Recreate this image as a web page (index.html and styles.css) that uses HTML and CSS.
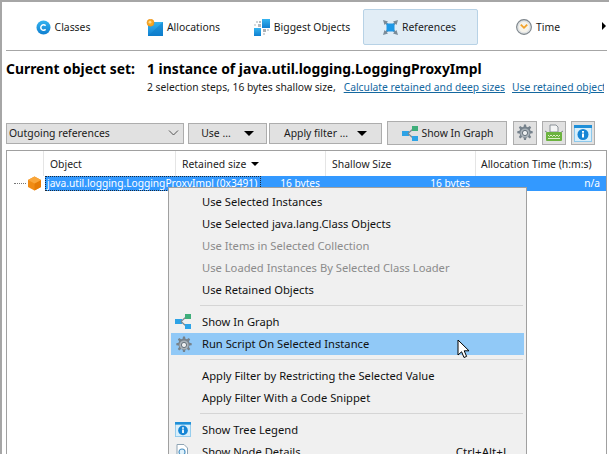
FILE: index.html
```html
<!DOCTYPE html>
<html lang="en">
<head>
<meta charset="utf-8">
<title>References</title>
<link rel="stylesheet" href="styles.css">
</head>
<body>
<svg class="defs" width="0" height="0" aria-hidden="true">
  <defs>
    <linearGradient id="blue" x1="0" y1="0" x2="0" y2="1"><stop offset="0" stop-color="#35b4f0"/><stop offset="1" stop-color="#0f7fd0"/></linearGradient>
    <g id="graph"><rect x="0" y="5" width="7" height="5" fill="#2ea3e6"/><path d="M6 7.5 L11 3 M6 7.5 L11 12" stroke="#7a8a94" stroke-width="1.2" fill="none"/><rect x="10" y="0" width="6" height="5" fill="#3fae7a"/><rect x="10" y="10" width="6" height="5" fill="#2ea3e6"/></g>
    <g id="gear"><path d="M8 0.5h2l.4 2.2 1.5.6 1.9-1.3 1.4 1.4-1.3 1.9.6 1.5 2.2.4v2l-2.2.4-.6 1.5 1.3 1.9-1.4 1.4-1.9-1.3-1.5.6-.4 2.2H8l-.4-2.2-1.5-.6-1.9 1.3-1.4-1.4 1.3-1.9-.6-1.5-2.2-.4v-2l2.2-.4.6-1.5-1.3-1.9 1.4-1.4 1.9 1.3 1.5-.6z" fill="#76828c"/><circle cx="9" cy="9" r="4.6" fill="#a9b2b9"/><circle cx="9" cy="9" r="2.6" fill="#eef0f1" stroke="#66727c"/></g>
    <g id="info"><rect x="0.5" y="0.5" width="17" height="16" fill="#d8effb" stroke="#8cc8ec"/><rect x="0" y="0" width="18" height="3" fill="#1f8fd8"/><circle cx="9" cy="9.5" r="5.5" fill="#1685d5"/><rect x="8" y="8.5" width="2" height="4" fill="#fff"/><rect x="8" y="6" width="2" height="1.7" fill="#fff"/></g>
  </defs>
</svg>
<div class="app">
  <nav class="tabs">
    <div class="tab tab-classes">
      <svg class="ico" width="15" height="15" viewBox="0 0 15 15"><circle cx="7.5" cy="7.5" r="7" fill="url(#blue)"/><path d="M9.6 5.8 A2.7 2.7 0 1 0 9.6 9.2" stroke="#fff" stroke-width="1.5" fill="none"/></svg>
      <span>Classes</span>
    </div>
    <div class="tab tab-alloc">
      <svg class="ico" width="17" height="17" viewBox="0 0 17 17"><rect x="2" y="3" width="15" height="14" fill="url(#blue)"/><path d="M2 17 L17 3 V17 Z" fill="#0c79c8" opacity=".5"/><circle cx="4.5" cy="3.7" r="3.5" fill="#f7a823" stroke="#ea8c10" stroke-width=".6"/><circle cx="4" cy="3.2" r="1.4" fill="#ffd98a"/></svg>
      <span>Allocations</span>
    </div>
    <div class="tab tab-big">
      <svg class="ico" width="16" height="17" viewBox="0 0 16 17"><rect x="8" y="0" width="8" height="9" fill="url(#blue)"/><rect x="0" y="9" width="7" height="8" fill="url(#blue)"/><rect x="2" y="2" width="2" height="2" fill="#cfd4d7"/><rect x="5" y="2" width="2" height="2" fill="#b5bbbf"/><rect x="0" y="5" width="2" height="2" fill="#d8dbdd"/><rect x="4" y="5" width="3" height="3" fill="#b5bbbf"/><rect x="9" y="10" width="3" height="3" fill="#aab0b5"/><rect x="13" y="10" width="2" height="2" fill="#cfd4d7"/><rect x="9" y="14" width="2" height="2" fill="#d0d4d7"/></svg>
      <span>Biggest Objects</span>
    </div>
    <div class="tab tab-refs">
      <svg class="ico" width="15" height="15" viewBox="0 0 15 15"><path d="M0 0 L5 1.5 L1.5 5 Z M15 0 L10 1.5 L13.5 5 Z M0 15 L1.5 10 L5 13.5 Z M15 15 L13.5 10 L10 13.5 Z" fill="#7b8c99"/><path d="M2 2 L13 13 M13 2 L2 13" stroke="#7b8c99" stroke-width="1.8"/><rect x="3.5" y="3.5" width="8" height="8" fill="#1e98e6"/></svg>
      <span>References</span>
    </div>
    <div class="tab tab-time">
      <svg class="ico" width="16" height="16" viewBox="0 0 16 16"><circle cx="8" cy="8" r="7.4" fill="#dfe2e4" stroke="#7d858b" stroke-width="1.1"/><circle cx="8" cy="8" r="5.3" fill="#f6f3ea"/><path d="M4.8 5.6 L8 8.8 L11.2 5.6" stroke="#f2a22a" stroke-width="1.8" fill="none"/></svg>
      <span>Time</span>
    </div>
    <span class="more"></span>
  </nav>
  <div class="rule"></div>

  <h1 class="title"><span class="title-label">Current object set:</span><span>1 instance of java.util.logging.LoggingProxyImpl</span></h1>
  <p class="sub"><span>2 selection steps, 16 bytes shallow size,</span><a class="link-a">Calculate retained and deep sizes</a><a class="link-b">Use retained objects</a></p>

  <div class="toolbar">
    <div class="ctl combo"><span>Outgoing references</span><svg width="11" height="6" viewBox="0 0 11 6"><path d="M1 .5 L5.5 5 L10 .5" stroke="#555" fill="none"/></svg></div>
    <div class="ctl btn-use"><span>Use ...</span><i class="caret"></i></div>
    <div class="ctl btn-apply"><span>Apply filter ...</span><i class="caret"></i></div>
    <div class="ctl tall btn-graph"><svg width="16" height="15" viewBox="0 0 16 15"><use href="#graph"/></svg><span>Show In Graph</span></div>
    <div class="ctl tall square"><svg width="18" height="18" viewBox="0 0 18 18"><use href="#gear"/></svg></div>
    <div class="ctl tall square"><svg width="18" height="18" viewBox="0 0 18 18"><path d="M5 1 h6 l2 2 v5 H5 Z" fill="#f4f5f5" stroke="#8a9197"/><path d="M0 7 L3 9 M18 7 L15 9" stroke="#7d858b"/><rect x="1" y="8" width="16" height="9" rx="1" fill="#6cb33f"/><path d="M3 11 l1.5 1.5 L6 11 l1.5 1.5 L9 11 l1.5 1.5 L12 11 l1.5 1.5 L15 11" stroke="#dff0c8" fill="none"/><rect x="3" y="14" width="12" height="1" fill="#dff0c8"/></svg></div>
    <div class="ctl tall square"><svg width="18" height="17" viewBox="0 0 18 17"><use href="#info"/></svg></div>
  </div>

  <section class="table">
    <div class="grid head">
      <div class="cell"></div>
      <div class="cell">Object</div>
      <div class="cell">Retained size<i class="caret small"></i></div>
      <div class="cell">Shallow Size</div>
      <div class="cell last">Allocation Time (h:m:s)</div>
    </div>
    <div class="grid row">
      <div class="tree"><i class="dots"></i><svg width="15" height="15" viewBox="0 0 15 15"><path d="M7.5 0.5 L14 4 V11 L7.5 14.5 L1 11 V4 Z" fill="#f08c14"/><path d="M7.5 7.5 L14 4 V11 L7.5 14.5 Z" fill="#e57c06"/><path d="M7.5 0.5 L14 4 L7.5 7.5 L1 4 Z" fill="#f9a63a"/></svg></div>
      <div class="sel obj"><span class="focus">java.util.logging.LoggingProxyImpl (0x3491)</span></div>
      <div class="sel num">16 bytes</div>
      <div class="sel num">16 bytes</div>
      <div class="sel num last">n/a</div>
    </div>
  </section>
</div>

<div class="menu">
  <div class="item">Use Selected Instances</div>
  <div class="item">Use Selected java.lang.Class Objects</div>
  <div class="item off">Use Items in Selected Collection</div>
  <div class="item off">Use Loaded Instances By Selected Class Loader</div>
  <div class="item">Use Retained Objects</div>
  <div class="sep"></div>
  <div class="item"><svg class="mi" width="16" height="15" viewBox="0 0 16 15"><use href="#graph"/></svg>Show In Graph</div>
  <div class="item hot"><svg class="mi" width="18" height="18" viewBox="0 0 18 18"><use href="#gear"/></svg>Run Script On Selected Instance</div>
  <div class="sep"></div>
  <div class="item">Apply Filter by Restricting the Selected Value</div>
  <div class="item">Apply Filter With a Code Snippet</div>
  <div class="sep"></div>
  <div class="item"><svg class="mi" width="16" height="15" viewBox="0 0 18 17"><use href="#info"/></svg>Show Tree Legend</div>
  <div class="item"><svg class="mi" width="14" height="16" viewBox="0 0 14 16"><path d="M2 .5 H9 L12.5 4 V15.5 H2 Z" fill="#fff" stroke="#8fa4b4"/><circle cx="7" cy="8" r="3" fill="#dff1fb" stroke="#4d93c4" stroke-width="1.2"/></svg>Show Node Details<span class="key">Ctrl+Alt+L</span></div>
</div>

<svg class="cursor" width="14" height="20" viewBox="0 0 14 20"><path d="M1 1 V16 L4.6 12.8 L7 18.5 L9.6 17.4 L7.2 11.8 H12 Z" fill="#fff" stroke="#000" stroke-width="1"/></svg>
</body>
</html>
```
FILE: styles.css
```css
* { box-sizing: border-box; }
html, body { margin: 0; padding: 0; }
body {
  width: 609px; height: 454px; overflow: hidden; position: relative;
  background: #fff; color: #1a1a1a;
  font: 10.4px/16px "Noto Sans", "Liberation Sans", sans-serif;
}
.defs { position: absolute; }
svg { display: block; flex: none; }
.app {
  height: 454px; width: 609px;
  border-top: 2px solid #a6a6a6; border-left: 2px solid #a6a6a6;
  padding-left: 4px;
  display: flex; flex-direction: column;
}
.tabs { display: flex; height: 36px; margin-top: 7px; position: relative; align-items: stretch; }
.tab { display: flex; align-items: center; justify-content: center; gap: 4px; border: 1px solid transparent; border-radius: 2px; font-size: 10.4px; }
.tab-classes { width: 114px; }
.tab-alloc { width: 126px; }
.tab-big { width: 112px; margin-right: 5px; }
.tab-refs { width: 115px; background: #e1edf6; border-color: #b7d2e6; padding-right: 2px; }
.tab-time { width: 120px; margin-right: 4px; }
.more { width: 0; height: 0; margin-top: 13px; border-left: 4px solid #000; border-top: 4px solid transparent; border-bottom: 4px solid transparent; }
.rule { width: 601px; height: 1px; background: #a6a6a6; margin-top: 5px; }

.title { margin: 8px 0 0; display: flex; font-size: 13.9px; line-height: 20px; font-weight: 700; color: #000; white-space: nowrap; }
.title-label { width: 141px; }
.sub { margin: 0 0 0 141px; width: 457px; height: 16px; overflow: hidden; display: flex; white-space: nowrap; font-size: 10.3px; }
.link-a { color: #14689f; text-decoration: underline; margin-left: 8px; }
.link-b { color: #14689f; text-decoration: underline; margin-left: 7px; }

.toolbar { display: flex; align-items: center; height: 24px; margin-top: 26px; }
.ctl { height: 21px; background: #e1e1e1; border: 1px solid #adadad; display: flex; align-items: center; justify-content: center; flex: none; }
.tall { height: 24px; }
.combo { width: 178px; justify-content: space-between; padding: 0 4px 0 2px; margin-right: 4px; }
.btn-use { width: 79px; margin-right: 2px; gap: 13px; }
.btn-apply { width: 113px; margin-right: 5px; gap: 9px; }
.btn-graph { width: 120px; margin-right: 6px; gap: 3px; padding-left: 2px; }
.square { width: 24px; margin-right: 5px; }
.caret { display: block; width: 0; height: 0; border-left: 5px solid transparent; border-right: 5px solid transparent; border-top: 5px solid #000; }
.caret.small { margin-left: 5px; border-left-width: 4px; border-right-width: 4px; border-top-width: 4px; }

.table { width: 601px; flex: 1; margin-top: 5px; border: 1px solid #a0a0a0; border-bottom: 0; }
.grid { display: grid; grid-template-columns: 37px 132px 150px 150px 130px; }
.head { height: 25px; }
.cell { border-right: 1px solid #e5e5e5; padding-left: 6px; display: flex; align-items: center; height: 25px; color: #222; white-space: nowrap; }
.cell.last { border-right: 0; padding-left: 5px; }
.row { height: 15px; line-height: 15px; font-size: 10.2px; }
.tree { display: flex; align-items: center; justify-content: flex-end; padding-right: 2px; }
.dots { display: block; width: 12px; margin-right: 1px; border-top: 1px dotted #777; }
.sel { background: #3399ff; color: #fff; white-space: nowrap; }
.num { text-align: right; padding-right: 6px; }
.focus { display: block; position: relative; width: 216px; height: 15px; padding-left: 2px; outline: 1px dotted #1b2a3a; outline-offset: -1px; }
.obj { margin-left: 1px; }

.menu {
  position: absolute; left: 168px; top: 187px; width: 359px;
  background: #f0f0f0; border: 1px solid #a0a0a0; padding: 3px 2px 0;
  color: #111; font-size: 11.2px;
}
.item { position: relative; height: 22px; line-height: 22px; padding-left: 31px; white-space: nowrap; }
.item.off { color: #8b8b8b; }
.item.hot { background: #91c9f7; }
.mi { position: absolute; left: 4px; top: 3px; }
.sep { height: 1px; background: #d5d5d5; margin: 4px 1px 5px 29px; }
.key { position: absolute; right: 15px; top: 0; font-size: 11.6px; }
.cursor { position: absolute; left: 457px; top: 339px; }
```
